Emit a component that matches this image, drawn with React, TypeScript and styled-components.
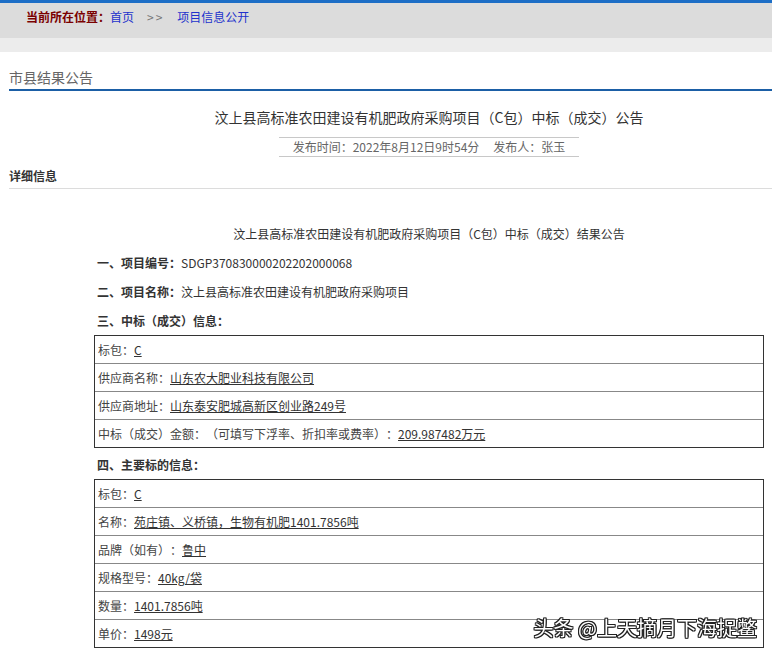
import styled, { createGlobalStyle } from "styled-components";

const GlobalStyle = createGlobalStyle`
  html, body {
    margin: 0;
    padding: 0;
    overflow: hidden;
    background: #fff;
  }
  body {
    font-family: "Noto Sans CJK SC", "Liberation Sans", sans-serif;
    font-size: 12px;
    color: #333;
    text-spacing-trim: space-all;
  }
`;

interface Cell {
  label: string;
  value: string;
}

const winInfo: Cell[] = [
  { label: "标包：", value: "C" },
  { label: "供应商名称：", value: "山东农大肥业科技有限公司" },
  { label: "供应商地址：", value: "山东泰安肥城高新区创业路249号" },
  {
    label: "中标（成交）金额：（可填写下浮率、折扣率或费率）：",
    value: "209.987482万元",
  },
];

const goodsInfo: Cell[] = [
  { label: "标包：", value: "C" },
  { label: "名称：", value: "苑庄镇、义桥镇，生物有机肥1401.7856吨" },
  { label: "品牌（如有）：", value: "鲁中" },
  { label: "规格型号：", value: "40kg/袋" },
  { label: "数量：", value: "1401.7856吨" },
  { label: "单价：", value: "1498元" },
];

export default function App() {
  return (
    <Page>
      <GlobalStyle />
      <TopBar>
        <CrumbLabel>当前所在位置：</CrumbLabel>
        <CrumbLink>首页</CrumbLink>
        <CrumbSep>&gt;&gt;</CrumbSep>
        <CrumbLink>项目信息公开</CrumbLink>
      </TopBar>
      <SubBar />
      <Main>
        <SectionTitle>市县结果公告</SectionTitle>
        <Title>汶上县高标准农田建设有机肥政府采购项目（C包）中标（成交）公告</Title>
        <MetaWrap>
          <Meta>
            发布时间：2022年8月12日9时54分<MetaGap />发布人：张玉
          </Meta>
        </MetaWrap>
        <DetailHead>详细信息</DetailHead>
        <Detail>
          <SubTitle>汶上县高标准农田建设有机肥政府采购项目（C包）中标（成交）结果公告</SubTitle>
          <Item>
            <b>一、项目编号：</b>SDGP370830000202202000068
          </Item>
          <Item>
            <b>二、项目名称：</b>汶上县高标准农田建设有机肥政府采购项目
          </Item>
          <Item>
            <b>三、中标（成交）信息：</b>
          </Item>
          <InfoTable>
            {winInfo.map((c) => (
              <Row key={c.label}>
                {c.label}
                <Value>{c.value}</Value>
              </Row>
            ))}
          </InfoTable>
          <Item $gap={7}>
            <b>四、主要标的信息：</b>
          </Item>
          <InfoTable>
            {goodsInfo.map((c) => (
              <Row key={c.label}>
                {c.label}
                <Value>{c.value}</Value>
              </Row>
            ))}
          </InfoTable>
        </Detail>
      </Main>
      <Watermark>头条 @上天摘月下海捉鳖</Watermark>
    </Page>
  );
}

const Page = styled.div`
  width: 100%;
  min-height: 654px;
`;

const TopBar = styled.div`
  border-top: 3px solid #1d6ec6;
  background: #dcdcdc;
  height: 38px;
  box-sizing: border-box;
  padding: 4px 0 0 26px;
  line-height: 20px;
  font-size: 12px;
  white-space: nowrap;
`;

const CrumbLabel = styled.span`
  font-weight: bold;
  color: #7a0000;
`;

const CrumbLink = styled.span`
  color: #2232cc;
`;

const CrumbSep = styled.span`
  color: #777;
  margin: 0 13px;
  letter-spacing: 2px;
`;

const SubBar = styled.div`
  height: 14px;
  background: #ececec;
`;

const Main = styled.div`
  width: 840px;
  margin-left: 9px;
`;

const SectionTitle = styled.div`
  margin-top: 13px;
  line-height: 24px;
  font-size: 14px;
  color: #666;
  border-bottom: 2px solid #1b5fa6;
`;

const Title = styled.div`
  margin-top: 14px;
  line-height: 24px;
  font-size: 14px;
  color: #333;
  text-align: center;
`;

const MetaWrap = styled.div`
  display: flex;
  justify-content: center;
  margin-top: 8px;
`;

const Meta = styled.div`
  border-top: 1px solid #c8c8c8;
  border-bottom: 1px solid #c8c8c8;
  padding: 0 14px;
  line-height: 18px;
  font-size: 12px;
  color: #666;
`;

const MetaGap = styled.span`
  display: inline-block;
  width: 14px;
`;

const DetailHead = styled.div`
  margin-top: 9px;
  line-height: 20px;
  padding-bottom: 2px;
  font-size: 12px;
  font-weight: bold;
  color: #333;
  border-bottom: 1px solid #dcdcdc;
`;

const Detail = styled.div`
  width: 670px;
  margin: 35px auto 0;
`;

const SubTitle = styled.div`
  line-height: 20px;
  text-align: center;
  color: #333;
`;

const Item = styled.div<{ $gap?: number }>`
  margin-top: ${(p) => p.$gap ?? 9}px;
  padding-left: 3px;
  line-height: 20px;
  color: #333;

  b {
    font-weight: bold;
  }
`;

const InfoTable = styled.div`
  margin-top: 4px;
  border: 1px solid #333;
`;

const Row = styled.div`
  height: 27px;
  line-height: 27px;
  padding-left: 3px;
  color: #444;
  white-space: nowrap;

  & + & {
    border-top: 1px solid #888;
  }
`;

const Value = styled.span`
  color: #333;
  text-decoration: underline;
`;

const Watermark = styled.div`
  position: fixed;
  right: 15px;
  bottom: 14px;
  font-size: 20px;
  line-height: 24px;
  color: #fff;
  white-space: nowrap;
  text-shadow: -1px 0 #222, 1px 0 #222, 0 -1px #222, 0 1px #222,
    1px 1px #222, -1px -1px #222, 1px -1px #222, -1px 1px #222;
`;
